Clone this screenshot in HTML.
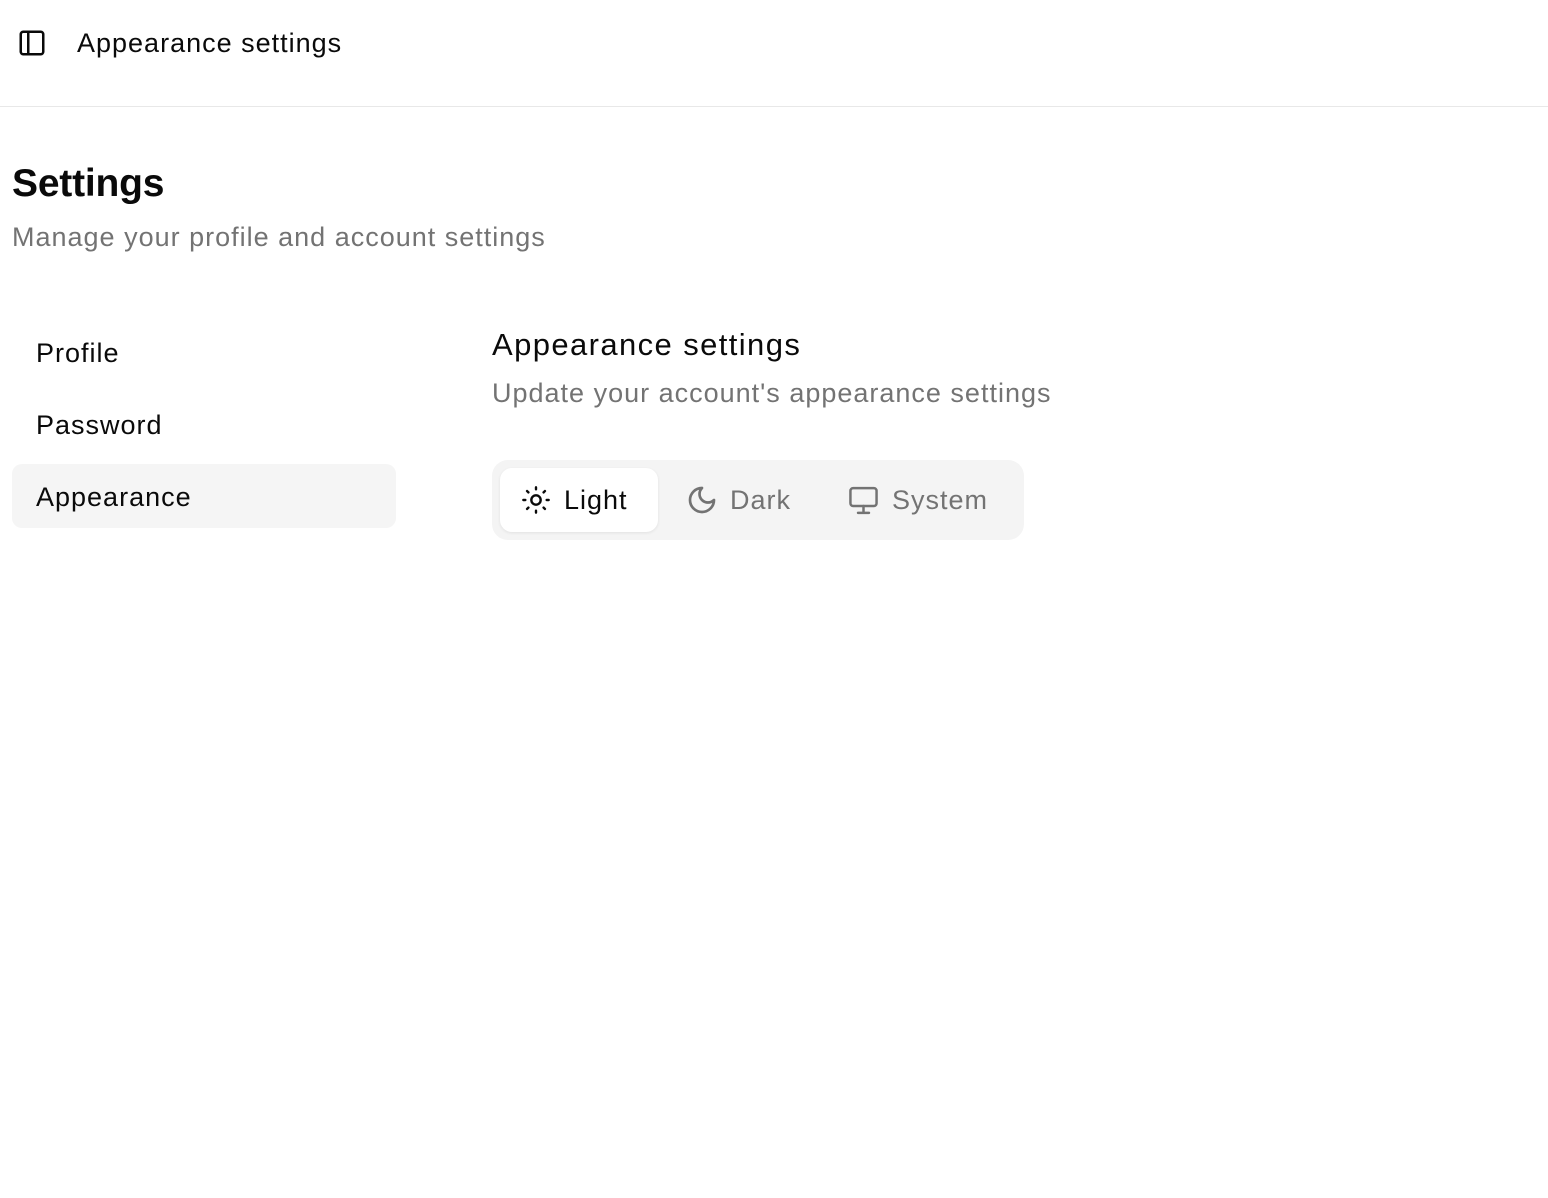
<!DOCTYPE html>
<html><head><meta charset="utf-8">
<style>
*{box-sizing:border-box;margin:0;padding:0}
body{width:1548px;height:1198px;background:#fff;font-family:"Liberation Sans",sans-serif;color:#0a0a0a;position:relative;overflow:hidden}
.abs{position:absolute;white-space:nowrap}
.hdr{left:0;top:0;width:1548px;height:107px;border-bottom:1px solid #e8e8e8}
.t{font-size:27px;letter-spacing:1px}
.muted{color:#737373}
</style></head><body>
<div class="abs hdr"></div>
<svg class="abs" style="left:17px;top:28px" width="30" height="30" viewBox="0 0 24 24" fill="none" stroke="#0a0a0a" stroke-width="2" stroke-linecap="round" stroke-linejoin="round"><rect x="3" y="3" width="18" height="18" rx="2"/><path d="M9 3v18"/></svg>
<div class="abs t" style="left:77px;top:28px">Appearance settings</div>

<div class="abs" style="left:12px;top:162px;font-size:39px;font-weight:bold;letter-spacing:-0.2px">Settings</div>
<div class="abs t muted" style="left:12px;top:222px">Manage your profile and account settings</div>

<div class="abs t" style="left:36px;top:338px">Profile</div>
<div class="abs t" style="left:36px;top:410px">Password</div>
<div class="abs" style="left:12px;top:464px;width:384px;height:64px;background:#f5f5f5;border-radius:10px"></div>
<div class="abs t" style="left:36px;top:482px">Appearance</div>

<div class="abs" style="left:492px;top:327px;font-size:31px;letter-spacing:1.4px">Appearance settings</div>
<div class="abs t muted" style="left:492px;top:378px">Update your account's appearance settings</div>

<div class="abs" style="left:492px;top:460px;width:532px;height:80px;background:#f4f4f4;border-radius:16px"></div>
<div class="abs" style="left:500px;top:468px;width:158px;height:64px;background:#fff;border-radius:12px;box-shadow:0 1px 3px rgba(0,0,0,.08)"></div>
<svg class="abs" style="left:520px;top:484px" width="32" height="32" viewBox="0 0 24 24" fill="none" stroke="#0a0a0a" stroke-width="1.8" stroke-linecap="round"><circle cx="12" cy="12" r="3.5"/><path d="M12 2.5v1.5M12 20v1.5M2.5 12H4M20 12h1.5M5.3 5.3l1 1M17.7 17.7l1 1M5.3 18.7l1-1M17.7 6.3l1-1"/></svg>
<div class="abs t" style="left:564px;top:485px">Light</div>
<svg class="abs" style="left:686px;top:484px" width="32" height="32" viewBox="0 0 24 24" fill="none" stroke="#737373" stroke-width="2" stroke-linecap="round" stroke-linejoin="round"><path d="M12 3a6 6 0 0 0 9 9 9 9 0 1 1-9-9Z"/></svg>
<div class="abs t muted" style="left:730px;top:485px">Dark</div>
<svg class="abs" style="left:847px;top:484px" width="33" height="33" viewBox="0 0 24 24" fill="none" stroke="#737373" stroke-width="1.8" stroke-linecap="round" stroke-linejoin="round"><rect x="2.5" y="3" width="19" height="13" rx="2"/><path d="M8 21h8M12 16v5"/></svg>
<div class="abs t muted" style="left:892px;top:485px">System</div>
</body></html>
